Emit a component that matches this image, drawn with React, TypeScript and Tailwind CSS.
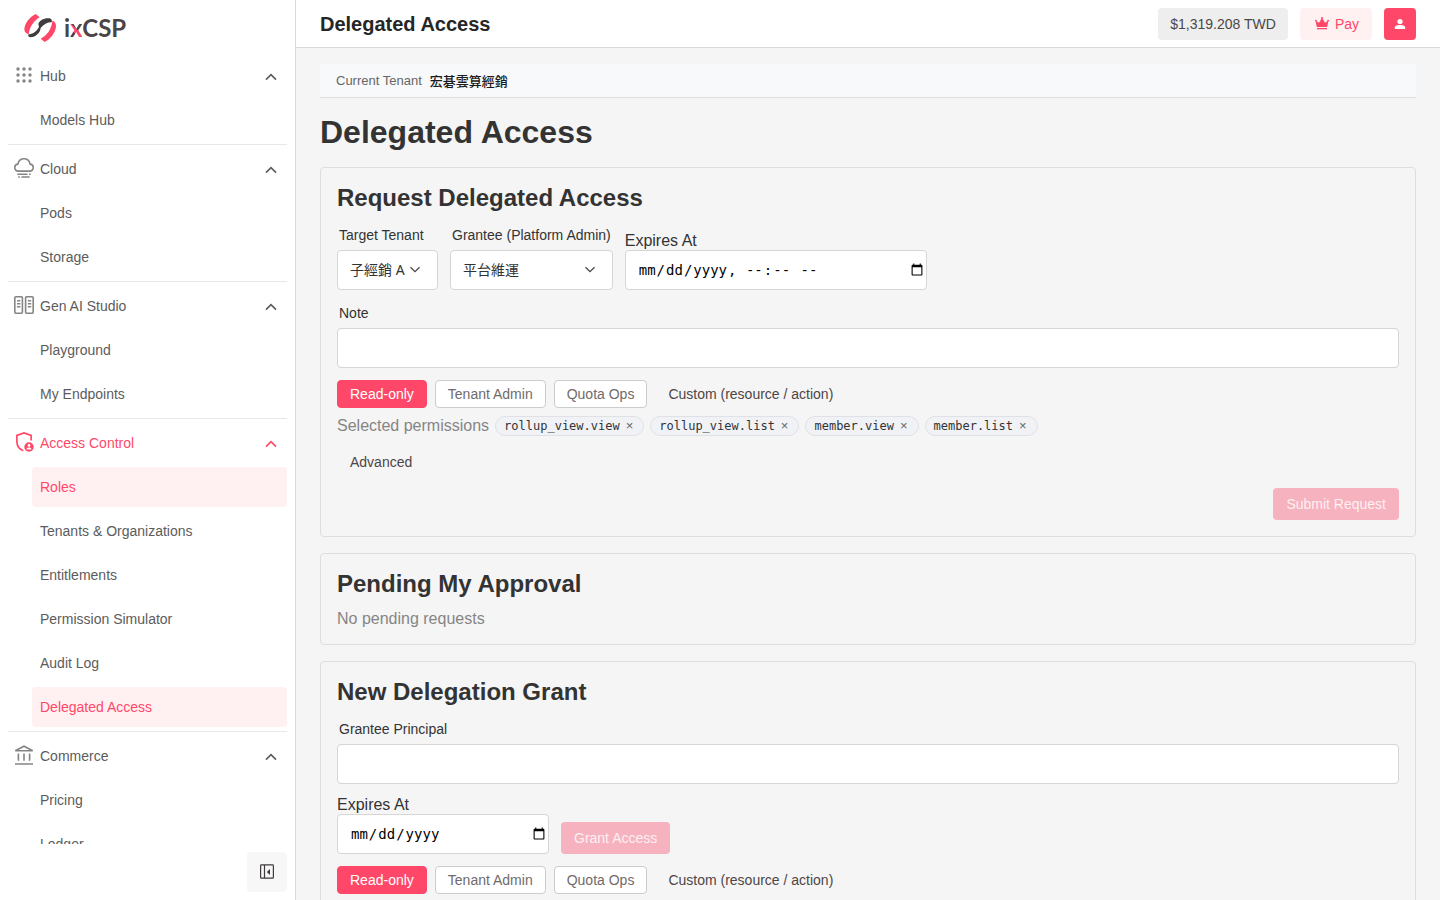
import type { ReactNode } from "react";

const iconProps = {
  viewBox: "0 0 20 20",
  fill: "none",
  stroke: "currentColor",
  strokeWidth: 1.4,
  "aria-hidden": true,
} as const;

function HubIcon() {
  return (
    <svg viewBox="0 0 20 20" fill="currentColor" className="size-5" aria-hidden="true">
      {[4, 10, 16].map((y) =>
        [4, 10, 16].map((x) => <circle key={`${x}-${y}`} cx={x} cy={y} r="1.7" />),
      )}
    </svg>
  );
}

function CloudIcon() {
  return (
    <svg {...iconProps} strokeWidth={1.6} className="size-5">
      <path d="M4.200 13.100h11.600a3.500 3.500 0 0 0 3.500-3.500c0-1.900-1.400-3.300-3.200-3.500C15.500 2.900 13 .8 10 .8S4.500 2.900 3.900 6.100C2.100 6.300.7 7.700.7 9.600a3.500 3.500 0 0 0 3.500 3.500Z" />
      <path d="M3.300 16.200H13.500M15 16.200h1.700M4.200 19h1.700M7.400 19h8.200" />
    </svg>
  );
}

function StudioIcon() {
  return (
    <svg {...iconProps} strokeWidth={1.6} className="size-5">
      <rect x="0.8" y="1.700" width="7.600" height="16.600" rx="1" />
      <rect x="11.600" y="1.700" width="7.600" height="16.600" rx="1" />
      <path d="M3 5.700h3.400M3 8.700h3.400M3 11.700h3.400M13.800 5.700h3.400M13.800 8.700h3.400M13.800 11.700h3.400" />
    </svg>
  );
}

function ShieldIcon() {
  return (
    <svg {...iconProps} strokeWidth={1.7} className="size-5">
      <path d="M9.300 18.700C5.500 17.200 2.900 13.800 2.900 9.500V3.400L10 .9l7.100 2.500v5.200" />
      <circle cx="15" cy="15" r="4.700" fill="currentColor" stroke="none" />
      <circle cx="15" cy="13.400" r="1.400" fill="#fff" stroke="none" />
      <path d="M12.400 17.400c.4-1.300 1.400-1.900 2.600-1.900s2.200.6 2.600 1.900Z" fill="#fff" stroke="none" />
    </svg>
  );
}

function CommerceIcon() {
  return (
    <svg {...iconProps} strokeWidth={1.6} className="size-5">
      <path d="M1.300 5.800 10 1.200l8.700 4.600ZM4.400 8.500v7.300M10 8.500v7.300M15.600 8.500v7.300M1 19h18" />
    </svg>
  );
}

function Chevron({ up = false, className }: { up?: boolean; className: string }) {
  return (
    <svg viewBox="0 0 12 12" fill="none" stroke="currentColor" className={className} aria-hidden="true">
      <path d={up ? "M1 9.600 6 4.600l5 5" : "M1.500 3.200 6 7.700l4.500-4.500"} strokeWidth={up ? 1.6 : 1.3} />
    </svg>
  );
}

function Logo() {
  return (
    <a href="#home" aria-label="ixCSP" className="flex h-14 shrink-0 items-center gap-2 pl-6">
      <svg viewBox="72 42 96 84" className="h-7 w-8" aria-hidden="true">
        <path d="M107 42 119 52C102 62 90 78 86 103C78 101 73 96 73 88C74 70 89 50 107 42Z" fill="#ff4869" />
        <path d="M115 72C118 60 134 53 149 55C155 57 157 61 155 67C144 66 132 72 122 84C121 98 107 111 92 112C86 112 84 108 85 103C98 103 110 94 117 81Z" fill="#403c3d" />
        <path d="M157 62C165 64 168 70 168 79C167 98 151 118 134 126L122 116C141 106 155 87 157 62Z" fill="#ff4869" />
      </svg>
      <span className="font-[Lato,sans-serif] text-2xl/7 font-bold text-[#4b4546]">
        i
        <span className="bg-[linear-gradient(45deg,#4b4546_32%,#ff4869_32%,#ff4869_48%,#4b4546_48%)] bg-clip-text text-transparent">
          x
        </span>
        CSP
      </span>
    </a>
  );
}

type Section = { name: string; icon: ReactNode; items: string[]; active?: boolean };

const sections: Section[] = [
  { name: "Hub", icon: <HubIcon />, items: ["Models Hub"] },
  { name: "Cloud", icon: <CloudIcon />, items: ["Pods", "Storage"] },
  { name: "Gen AI Studio", icon: <StudioIcon />, items: ["Playground", "My Endpoints"] },
  {
    name: "Access Control",
    icon: <ShieldIcon />,
    active: true,
    items: ["Roles", "Tenants & Organizations", "Entitlements", "Permission Simulator", "Audit Log", "Delegated Access"],
  },
  { name: "Commerce", icon: <CommerceIcon />, items: ["Pricing", "Ledger"] },
];

const highlighted = ["Roles", "Delegated Access"];

function Sidebar() {
  return (
    <aside className="flex w-74 shrink-0 flex-col border-r border-[#d9d9d9] bg-white text-sm text-[#5c5c5c]">
      <Logo />
      <nav className="min-h-0 flex-1 overflow-y-auto px-2 [scrollbar-width:none]">
        {sections.map((section) => (
          <section key={section.name} className="mb-1 border-b border-[#e8e8e8] pb-1">
            <button
              type="button"
              aria-expanded="true"
              className={`flex h-10 w-full items-center gap-1.5 pr-2.5 pl-1.5 text-left ${section.active ? "text-[#ff4869]" : ""}`}
            >
              <span className={`-mt-0.5 ${section.active ? "" : "text-[#858585]"}`}>{section.icon}</span>
              <span className="flex-1">{section.name}</span>
              <Chevron up className="size-3" />
            </button>
            <ul className="mt-1 flex flex-col gap-1 pl-6">
              {section.items.map((item) => (
                <li key={item}>
                  <a
                    href="#page"
                    className={`flex h-10 items-center rounded-sm px-2 ${highlighted.includes(item) ? "bg-[#fff0f1] text-[#ff4869]" : ""}`}
                  >
                    {item}
                  </a>
                </li>
              ))}
            </ul>
          </section>
        ))}
      </nav>
      <div className="flex h-14 shrink-0 items-center justify-end px-2">
        <button type="button" aria-label="Collapse sidebar" className="flex size-10 items-center justify-center rounded-sm bg-[#f7f7f7] text-[#413b3c]">
          <svg viewBox="0 0 16 16" fill="none" stroke="currentColor" strokeWidth="1.2" className="size-4" aria-hidden="true">
            <rect x="1.600" y="0.900" width="12.800" height="13.300" rx="0.8" />
            <path d="M5.500 1v13.200" />
            <path d="M11 5v6L7.800 8Z" fill="currentColor" stroke="none" />
          </svg>
        </button>
      </div>
    </aside>
  );
}

function Header() {
  return (
    <header className="flex h-12 shrink-0 items-center gap-3 border-b border-[#d9d9d9] bg-white px-6 text-sm">
      <div className="flex-1 text-xl font-bold text-[#262626]">Delegated Access</div>
      <button type="button" className="h-8 rounded-sm bg-[#eeeeee] px-3 text-[#4d4647]">
        $1,319.208 TWD
      </button>
      <button type="button" className="flex h-8 items-center gap-1.5 rounded-sm bg-[#fff0f1] px-[13px] text-[#ff4869]">
        <svg viewBox="0 0 16 16" fill="currentColor" className="size-4" aria-hidden="true">
          <path d="M2.500 4.500 6 6.700 9 1.700l3 5 3.500-2.200L14.200 11H3.800Z" />
          <circle cx="2.900" cy="4.600" r="0.900" />
          <circle cx="9" cy="1.900" r="1" />
          <circle cx="15.100" cy="4.600" r="0.900" />
          <path d="M4 12h10v1.300H4Z" />
        </svg>
        <span>Pay</span>
      </button>
      <button type="button" aria-label="Account" className="flex size-8 items-center justify-center rounded-sm bg-[#ff4869] text-white">
        <svg viewBox="0 0 16 16" fill="currentColor" className="size-4" aria-hidden="true">
          <circle cx="8" cy="5.500" r="2.600" />
          <path d="M2.800 13v-1.500C2.800 9.800 5.600 9 8 9s5.200.8 5.200 2.500V13Z" />
        </svg>
      </button>
    </header>
  );
}

const fieldClass = "h-10 rounded-sm border border-[#d6d6d6] bg-white";

function Card({ title, children }: { title: string; children: ReactNode }) {
  return (
    <section className="flex flex-col gap-3 rounded-sm border border-[#dedede] p-4">
      <h2 className="text-2xl/7 font-bold">{title}</h2>
      {children}
    </section>
  );
}

function SelectField({ id, label, value }: { id: string; label: string; value: string }) {
  return (
    <div className="flex flex-col gap-1">
      <label htmlFor={id} className="px-0.5 text-sm/[22px]">
        {label}
      </label>
      <div className="grid items-center">
        <select
          id={id}
          className={`${fieldClass} col-start-1 row-start-1 w-full appearance-none pr-8 pl-3 font-['Noto_Sans','Noto_Sans_CJK_JP',sans-serif] text-sm text-[#333]`}
        >
          <option>{value}</option>
        </select>
        <Chevron className="pointer-events-none col-start-1 row-start-1 mr-[17px] size-3 justify-self-end text-[#4d4647]" />
      </div>
    </div>
  );
}

function TextField({ id, label }: { id: string; label: string }) {
  return (
    <div className="flex flex-col gap-1">
      <label htmlFor={id} className="px-0.5 text-sm/[22px]">
        {label}
      </label>
      <input id={id} type="text" className={`${fieldClass} w-full px-3 text-sm`} />
    </div>
  );
}

function DateField({ id, type, width }: { id: string; type: string; width: string }) {
  return (
    <div className="flex flex-col">
      <label htmlFor={id} className="text-base/[18px]">
        Expires At
      </label>
      <input
        id={id}
        type={type}
        className={`${fieldClass} ${width} pr-0 pl-3 font-['DejaVu_Sans_Mono',monospace] text-sm text-black`}
      />
    </div>
  );
}

function Presets() {
  return (
    <div className="flex flex-wrap gap-2 text-sm">
      <button type="button" className="h-7 rounded-sm border border-[#ff4869] bg-[#ff4869] px-3 text-white">
        Read-only
      </button>
      {["Tenant Admin", "Quota Ops"].map((name) => (
        <button key={name} type="button" className="h-7 rounded-sm border border-[#cccccc] bg-white px-3 text-[#706b6c]">
          {name}
        </button>
      ))}
      <button type="button" className="h-7 border border-transparent px-3 text-[#4d4647]">
        Custom (resource / action)
      </button>
    </div>
  );
}

const disabledButton = "h-8 rounded-sm bg-[#f7b2bf] px-[13px] text-sm text-[#fdf0f2]";

export default function App() {
  return (
    <div className="flex h-screen overflow-hidden bg-[#f5f5f5] font-['Liberation_Sans','Noto_Sans_CJK_JP',sans-serif] text-[#333]">
      <Sidebar />
      <div className="flex min-w-0 flex-1 flex-col">
        <Header />
        <main className="flex min-h-0 flex-1 flex-col gap-4 overflow-y-auto px-6 py-4 *:shrink-0 [scrollbar-width:none]">
          <div className="flex items-center gap-2 border-b border-[#dedede] bg-[#f8f9fb] px-4 py-1.5 text-[13px]/[21px]">
            <span className="text-[#666]">Current Tenant</span>
            <span className="font-['Noto_Sans_CJK_JP',sans-serif] font-medium text-[#1a1a1a]">宏碁雲算經銷</span>
          </div>
          <h1 className="text-[32px]/[37px] font-bold">Delegated Access</h1>

          <Card title="Request Delegated Access">
            <form className="contents">
              <div className="flex flex-wrap items-end gap-3">
                <SelectField id="target-tenant" label="Target Tenant" value="子經銷 A" />
                <SelectField id="grantee" label="Grantee (Platform Admin)" value="平台維運" />
                <DateField id="request-expires" type="datetime-local" width="w-[302px]" />
              </div>
              <TextField id="note" label="Note" />
              <div className="flex flex-col gap-2">
                <Presets />
                <div className="flex flex-wrap items-center gap-1.5">
                  <span className="text-base/5 text-[#858585]">Selected permissions</span>
                  {["rollup_view.view", "rollup_view.list", "member.view", "member.list"].map((permission) => (
                    <span
                      key={permission}
                      className="flex h-5 items-center gap-1.5 rounded-full border border-[#dfe1e6] bg-[#f0f2f6] pr-2.5 pl-2 font-['DejaVu_Sans_Mono',monospace] text-xs text-[#333]"
                    >
                      {permission}
                      <button type="button" aria-label={`Remove ${permission}`} className="font-['Liberation_Sans',sans-serif] text-[13px]/4 text-[#666]">
                        ×
                      </button>
                    </span>
                  ))}
                </div>
              </div>
              <button type="button" className="h-7 self-start border border-transparent px-3 text-sm text-[#4d4647]">
                Advanced
              </button>
              <button type="submit" disabled className={`${disabledButton} self-end`}>
                Submit Request
              </button>
            </form>
          </Card>

          <Card title="Pending My Approval">
            <p className="text-base/[18px] text-[#858585]">No pending requests</p>
          </Card>

          <Card title="New Delegation Grant">
            <form className="contents">
              <TextField id="grantee-principal" label="Grantee Principal" />
              <div className="flex flex-wrap items-end gap-3">
                <DateField id="grant-expires" type="date" width="w-[212px]" />
                <button type="submit" disabled className={disabledButton}>
                  Grant Access
                </button>
              </div>
              <Presets />
            </form>
          </Card>
        </main>
      </div>
    </div>
  );
}
